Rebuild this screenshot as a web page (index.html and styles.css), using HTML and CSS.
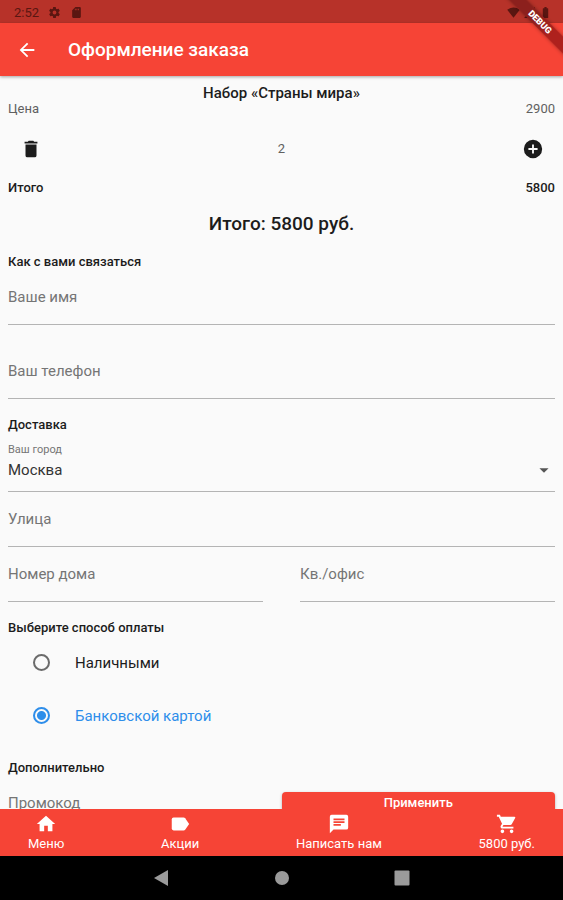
FILE: index.html
```html
<!DOCTYPE html>
<html lang="ru">
<head>
<meta charset="utf-8">
<meta name="viewport" content="width=device-width, initial-scale=1">
<title>Оформление заказа</title>
<link rel="stylesheet" href="styles.css">
</head>
<body>
<div class="app">
  <div class="status">
    <span>2:52</span>
    <svg class="status-icon" viewBox="0 0 24 24"><path fill-rule="evenodd" d="M19.4 13a7.500 7.500 0 0 0 0-2l2.100-1.600a.5.5 0 0 0 .1-.7l-2-3.400a.5.5 0 0 0-.6-.2l-2.500 1a7.300 7.300 0 0 0-1.700-1l-.4-2.600a.5.5 0 0 0-.5-.5h-4a.5.5 0 0 0-.5.5L9 5.100a7.700 7.700 0 0 0-1.700 1l-2.500-1a.5.5 0 0 0-.6.2l-2 3.400a.5.5 0 0 0 .1.700L4.500 11a8 8 0 0 0 0 2l-2.100 1.600a.5.5 0 0 0-.1.700l2 3.400c.1.200.4.300.6.200l2.500-1a7.300 7.300 0 0 0 1.700 1l.4 2.600c0 .3.200.5.5.5h4c.3 0 .5-.2.5-.5l.4-2.600a7.700 7.700 0 0 0 1.700-1l2.500 1c.2.100.5 0 .6-.2l2-3.400a.5.5 0 0 0-.1-.7zM12 15.500a3.500 3.500 0 1 1 0-7 3.500 3.500 0 0 1 0 7z"/></svg>
    <svg class="status-icon" viewBox="0 0 24 24"><path fill-rule="evenodd" d="M18 2h-8L4 8v12a2 2 0 0 0 2 2h12a2 2 0 0 0 2-2V4a2 2 0 0 0-2-2zM9 5h1.500v3H9zm3 0h1.500v3H12zm3 0h1.500v3H15z"/></svg>
    <svg class="status-icon status-right" viewBox="0 0 24 24"><path d="M12 21.500 23.600 7A18 18 0 0 0 .4 7z"/></svg>
    <svg class="status-icon" viewBox="0 0 24 24"><path d="M2 22h20V2z"/></svg>
    <svg class="status-icon" viewBox="0 0 24 24"><path d="M16 4h-2V2h-4v2H8a1 1 0 0 0-1 1v16a1 1 0 0 0 1 1h8a1 1 0 0 0 1-1V5a1 1 0 0 0-1-1z"/></svg>
  </div>
  <header class="bar">
    <button class="icon-button" type="button" aria-label="Назад"><svg class="icon" viewBox="0 0 24 24"><path d="M20 10.800H7.800l5.600-5.400L12 4l-8 8 8 8 1.400-1.400-5.600-5.400H20z"/></svg></button>
    <h1 class="bar-title">Оформление заказа</h1>
  </header>
  <div class="banner"><span class="banner-text">DEBUG</span></div>

  <main class="content">
    <h2 class="product">Набор «Страны мира»</h2>
    <div class="row"><span>Цена</span><span>2900</span></div>
    <div class="quantity">
      <button class="icon-button" type="button" aria-label="Удалить"><svg class="icon" viewBox="0 0 24 24"><path d="M6 19a2 2 0 0 0 2 2h8a2 2 0 0 0 2-2V7H6zM19 4h-3.500l-1-1h-5l-1 1H5v2h14z"/></svg></button>
      <span>2</span>
      <button class="icon-button" type="button" aria-label="Добавить"><svg class="icon" viewBox="0 0 24 24"><path d="M12 2a10 10 0 1 0 0 20 10 10 0 0 0 0-20zm5 11h-4v4h-2v-4H7v-2h4V7h2v4h4z"/></svg></button>
    </div>
    <div class="row row-strong"><span>Итого</span><span>5800</span></div>
    <p class="total">Итого: 5800 руб.</p>

    <h3 class="section">Как с вами связаться</h3>
    <div class="stack">
      <input class="field" type="text" placeholder="Ваше имя" aria-label="Ваше имя">
      <input class="field" type="tel" placeholder="Ваш телефон" aria-label="Ваш телефон">
    </div>

    <h3 class="section">Доставка</h3>
    <div class="select-field">
      <label class="select-label" for="city">Ваш город</label>
      <div class="select-line">
        <select class="select" id="city"><option>Москва</option></select>
        <svg class="caret" viewBox="0 0 24 24"><path d="m7 10 5 5 5-5z"/></svg>
      </div>
    </div>
    <input class="field" type="text" placeholder="Улица" aria-label="Улица">
    <div class="pair">
      <input class="field" type="text" placeholder="Номер дома" aria-label="Номер дома">
      <input class="field" type="text" placeholder="Кв./офис" aria-label="Кв./офис">
    </div>

    <h3 class="section">Выберите способ оплаты</h3>
    <label class="option"><input class="radio" type="radio" name="payment"><span>Наличными</span></label>
    <label class="option"><input class="radio" type="radio" name="payment" checked><span>Банковской картой</span></label>

    <h3 class="section">Дополнительно</h3>
    <div class="promo">
      <input class="field" type="text" placeholder="Промокод" aria-label="Промокод">
      <button class="apply" type="button">Применить</button>
    </div>
  </main>

  <nav class="tabs">
    <a class="tab" href="#menu"><svg class="icon" viewBox="0 0 24 24"><path d="M10 20v-6h4v6h5v-8h3L12 3 2 12h3v8z"/></svg>Меню</a>
    <a class="tab" href="#offers"><svg class="icon" viewBox="0 0 24 24"><path d="M17.600 5.800A2 2 0 0 0 16 5H5a2 2 0 0 0-2 2v10a2 2 0 0 0 2 2h11a2 2 0 0 0 1.600-.8L22 12z"/></svg>Акции</a>
    <a class="tab" href="#chat"><svg class="icon" viewBox="0 0 24 24"><path d="M20 2H4a2 2 0 0 0-2 2v18l4-4h14a2 2 0 0 0 2-2V4a2 2 0 0 0-2-2zM6 9h12v2H6zm8 5H6v-2h8zm4-6H6V6h12z"/></svg>Написать нам</a>
    <a class="tab" href="#cart"><svg class="icon" viewBox="0 0 24 24"><path d="M7 18a2 2 0 1 0 0 4 2 2 0 0 0 0-4zM1 2v2h2l3.600 7.600L5.200 14c-.7 1.300.3 3 1.800 3h12v-2H7.400a.2.2 0 0 1-.2-.3L8.100 13h7.500c.7 0 1.400-.4 1.700-1l3.600-6.500A1 1 0 0 0 20 4H5.200l-.9-2zm16 16a2 2 0 1 0 0 4 2 2 0 0 0 0-4z"/></svg>5800 руб.</a>
  </nav>
  <div class="system">
    <button class="system-button" type="button" aria-label="Назад"><svg class="system-icon" viewBox="0 0 16 16"><path d="M14 0v16L0 8z"/></svg></button>
    <button class="system-button" type="button" aria-label="Домой"><svg class="system-icon" viewBox="0 0 16 16"><circle cx="8" cy="8" r="7"/></svg></button>
    <button class="system-button" type="button" aria-label="Обзор"><svg class="system-icon" viewBox="0 0 16 16"><rect width="15" height="15" x=".5" y=".5" rx="1"/></svg></button>
  </div>
</div>
</body>
</html>
```
FILE: styles.css
```css
* {
  box-sizing: border-box;
}

body {
  margin: 0;
  background: #fafafa;
  color: #1c1c1c;
  font: 13px/16px Roboto, "Noto Sans", sans-serif;
}

h1, h2, h3, p {
  margin: 0;
}

button, input, select {
  margin: 0;
  padding: 0;
  border: 0;
  border-radius: 0;
  background: none;
  color: inherit;
  font: inherit;
}

svg {
  display: block;
  fill: currentColor;
}

.app {
  position: relative;
  display: flex;
  flex-direction: column;
  height: 100vh;
  overflow: hidden;
}

.status {
  display: flex;
  flex: none;
  align-items: center;
  gap: 9px;
  height: 23px;
  padding: 2px 11px 0 14px;
  background: #b73229;
  color: #5a1611;
}

.status-icon {
  width: 13px;
  height: 13px;
}

.status .status-right {
  margin-left: auto;
}

.status-right ~ .status-icon {
  margin-left: -6px;
}

.bar {
  z-index: 1;
  display: flex;
  flex: none;
  align-items: center;
  gap: 19px;
  height: 53px;
  padding: 0 4px;
  background: #f64436;
  box-shadow: 0 1px 3px rgba(0, 0, 0, 0.35);
  color: #fff;
}

.bar-title {
  font-size: 19px;
  font-weight: 500;
  line-height: 24px;
}

.icon-button {
  display: flex;
  align-items: center;
  justify-content: center;
  width: 45px;
  height: 45px;
}

.icon {
  width: 22px;
  height: 22px;
}

.banner {
  position: absolute;
  z-index: 2;
  top: 16px;
  right: -32px;
  width: 110px;
  height: 12px;
  background: linear-gradient(90deg, #8c201d 45%, #ae211d 65%);
  box-shadow: 0 0 4px rgba(0, 0, 0, 0.35);
  color: #fff;
  font-size: 9px;
  font-weight: 900;
  line-height: 12px;
  text-align: center;
  transform: rotate(45deg);
}

.content {
  flex: 1;
  min-height: 0;
  padding: 9px 8px 0;
  overflow: hidden;
}

.product {
  font-size: 15px;
  font-weight: 500;
  line-height: 16px;
  text-align: center;
}

.row {
  display: flex;
  justify-content: space-between;
  color: #606060;
}

.row-strong {
  color: #1c1c1c;
  font-weight: 500;
}

.quantity {
  display: flex;
  align-items: center;
  justify-content: space-between;
  height: 63px;
  color: #606060;
}

.quantity .icon-button {
  color: #1c1c1c;
}

.total {
  margin-top: 16px;
  font-size: 19px;
  font-weight: 500;
  line-height: 24px;
  text-align: center;
}

.section {
  margin-top: 18px;
  font-size: 13px;
  font-weight: 500;
  line-height: 16px;
}

.stack {
  display: grid;
  gap: 19px;
}

.field {
  display: block;
  width: 100%;
  min-width: 0;
  height: 55px;
  border-bottom: 1px solid #b4b4b4;
  font-size: 15px;
}

.field::placeholder {
  color: #757575;
  opacity: 1;
}

.select-field {
  padding-top: 9px;
  border-bottom: 1px solid #b4b4b4;
}

.select-label {
  display: block;
  color: #757575;
  font-size: 11px;
}

.select-line {
  display: grid;
  align-items: center;
}

.select,
.caret {
  grid-area: 1 / 1;
}

.select {
  width: 100%;
  height: 24px;
  margin-bottom: 9px;
  appearance: none;
  color: #333;
  font-size: 15px;
}

.caret {
  justify-self: end;
  width: 22px;
  height: 22px;
  margin-bottom: 9px;
  color: #555;
  pointer-events: none;
}

.pair {
  display: grid;
  grid-template-columns: 1fr 1fr;
  gap: 37px;
}

.option {
  display: flex;
  align-items: center;
  gap: 25px;
  height: 53px;
  padding-left: 25px;
  font-size: 15px;
}

.radio {
  width: 17px;
  height: 17px;
  appearance: none;
  border: 2px solid #6b6b6b;
  border-radius: 50%;
}

.radio:checked {
  border-color: #2e8eea;
  background: radial-gradient(circle, #2e8eea 4px, transparent 5px);
}

.option:has(:checked) {
  color: #2e8eea;
}

.promo {
  display: grid;
  grid-template-columns: 1fr 1fr;
  align-items: start;
}

.apply {
  height: 22px;
  margin-top: 16px;
  border-radius: 4px;
  background: #f64436;
  box-shadow: 0 1px 3px rgba(0, 0, 0, 0.3);
  color: #fff;
  font-weight: 500;
}

.tabs {
  z-index: 1;
  display: flex;
  flex: none;
  justify-content: space-between;
  height: 47px;
  padding: 4px 28px 0;
  background: #f64436;
  color: #fff;
}

.tab {
  display: flex;
  flex-direction: column;
  align-items: center;
  gap: 1px;
  color: inherit;
  text-decoration: none;
}

.system {
  z-index: 1;
  display: flex;
  flex: none;
  justify-content: center;
  gap: 76px;
  height: 44px;
  background: #000;
  color: #9a9a9a;
}

.system-button {
  display: flex;
  align-items: center;
  justify-content: center;
  width: 44px;
}

.system-icon {
  width: 16px;
  height: 16px;
}
```
